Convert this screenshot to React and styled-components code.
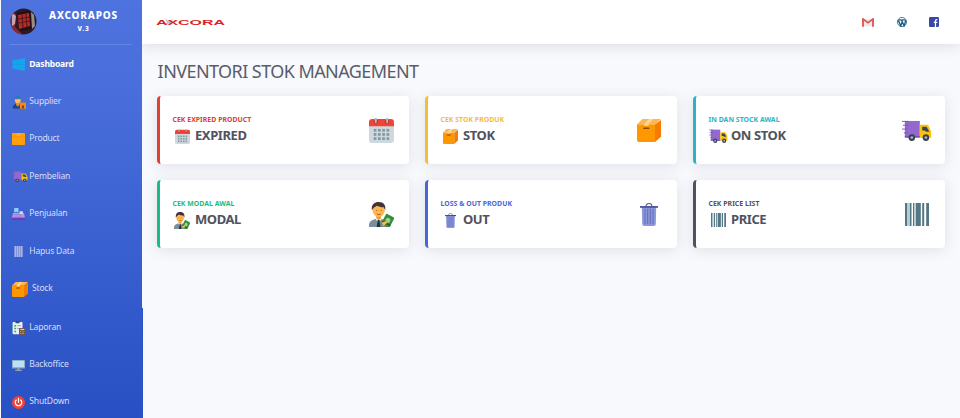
import React from "react";
import styled, { createGlobalStyle } from "styled-components";

const GlobalStyle = createGlobalStyle`
  * { box-sizing: border-box; }
  body { margin: 0; background: #f8f9fd; font-family: "Noto Sans", "Open Sans", sans-serif; }
`;

const Page = styled.div`
  display: flex;
  height: 418px;
  overflow: hidden;
  padding-left: 1px;
`;

const Sidebar = styled.aside`
  position: relative;
  width: 141px;
  flex: none;
  background: linear-gradient(180deg, #4e73df 0%, #4a6fdc 20%, #2850c4 100%);

  &::after {
    content: "";
    position: absolute;
    right: -1px;
    bottom: 0;
    width: 1px;
    height: 110px;
    background: #2c54c8;
  }
`;

const Brand = styled.div`
  display: flex;
  height: 45px;
  margin: 0 10px 0 9px;
  border-bottom: 1px solid #6585e2;
`;

const BrandLogo = styled.div`
  width: 27px;
  height: 27px;
  margin-top: 8px;
`;

const BrandText = styled.div`
  flex: 1;
  padding: 9px 2px 0 0;
  text-align: center;
  color: #fff;
  font-weight: 800;
  font-size: 10px;
  line-height: 13px;
  letter-spacing: 0.8px;
`;

const Version = styled.div`
  font-size: 6.6px;
  line-height: 13px;
  letter-spacing: 0.7px;
`;

const Nav = styled.nav`
  display: flex;
  flex-direction: column;
`;

const NavItem = styled.a`
  display: flex;
  align-items: center;
  height: 37.4px;
  margin-top: ${(p) => p.$gap || 0}px;
  padding-left: 11px;
  color: ${(p) => (p.$active ? "#fff" : "#d6def7")};
  font-weight: ${(p) => (p.$active ? 700 : 400)};
  font-size: 8.6px;
  letter-spacing: -0.22px;
`;

const NavIcon = styled.span`
  display: flex;
  flex: none;
  width: ${(p) => (p.$wide ? 20 : 17.3)}px;
  padding-top: 2px;
`;

const NavLabel = styled.span`
  white-space: nowrap;
`;

const Main = styled.main`
  flex: 1;
  min-width: 0;
`;

const TopBar = styled.header`
  display: flex;
  align-items: center;
  justify-content: space-between;
  height: 44px;
  padding: 0 21px 0 13px;
  background: #fff;
  box-shadow: 0 2px 14px rgba(58, 59, 69, 0.14);
`;

const Links = styled.div`
  display: flex;
  align-items: center;
  gap: 22.5px;
`;

const Title = styled.h1`
  margin: 13.500px 0 0 15.6px;
  height: 26.500px;
  font-weight: 400;
  font-size: 18px;
  line-height: 26px;
  letter-spacing: -0.57px;
  color: #5a5c69;
  white-space: nowrap;
`;

const Grid = styled.div`
  display: grid;
  grid-template-columns: repeat(3, 252px);
  grid-auto-rows: 68px;
  gap: 16px;
  margin: 12px 0 0 15px;
`;

const Card = styled.section`
  display: flex;
  align-items: center;
  justify-content: space-between;
  padding: 0 13px 0 12.500px;
  background: #fff;
  border-left: 3px solid ${(p) => p.$color};
  border-radius: 4px;
  box-shadow: 0 2px 14px rgba(58, 59, 69, 0.13);
`;

const CardLabel = styled.div`
  color: ${(p) => p.$color};
  font-weight: 700;
  font-size: 6.9px;
  line-height: 10px;
  letter-spacing: 0.03px;
  white-space: nowrap;
`;

const CardValue = styled.div`
  display: flex;
  align-items: center;
  height: 20px;
  color: #50525f;
  font-weight: 700;
  font-size: 13px;
  line-height: 20px;
  letter-spacing: -0.42px;
  white-space: nowrap;
`;

const SmallIcon = styled.span`
  display: flex;
  justify-content: center;
  width: 19px;
  margin: 2px 3.500px 0 0;
`;

const LargeIcon = styled.span`
  display: flex;
  justify-content: center;
  width: 30px;
`;

const Svg = ({ size = 14, w, children, box = "0 0 24 24" }) => (
  <svg width={w || size} height={size} viewBox={box} preserveAspectRatio="none">{children}</svg>
);

const Calendar = (p) => (
  <Svg {...p}>
    <path d="M0 5h24v16a3 3 0 0 1-3 3H3a3 3 0 0 1-3-3z" fill="#cfd8dc" />
    <path d="M0 8V4a3 3 0 0 1 3-3h18a3 3 0 0 1 3 3v4z" fill="#f44336" />
    <circle cx="6.5" cy="3.5" r="2" fill="#b71c1c" />
    <circle cx="17.5" cy="3.5" r="2" fill="#b71c1c" />
    <path d="M6.5 0v4M17.5 0v4" stroke="#b0bec5" strokeWidth="2" strokeLinecap="round" />
    {[10.5, 14.5, 18.5].map((y) =>
      [4.5, 8.6, 12.7, 16.8].map((x) => <rect key={`${x}-${y}`} x={x} y={y} width="2.6" height="2.6" fill="#8199a5" />)
    )}
  </Svg>
);

const Box = (p) => (
  <Svg {...p}>
    <path d="M0 5.5h18V24H2a2 2 0 0 1-2-2z" fill="#ff9800" />
    <path d="M18 5.5L24 1v17.5L18 24z" fill="#f57c00" />
    <path d="M0 5.5L5.5 0H24l-6 5.5z" fill="#ffb74d" />
    <path d="M7 5.5L12 0h4l-4.500 5.500v1.500H7z" fill="#ffd699" />
    <rect x="6" y="8.8" width="6.5" height="1.6" rx=".8" fill="#8a4b00" />
  </Svg>
);

const FlatBox = (p) => (
  <Svg {...p}>
    <rect width="24" height="24" rx="1.5" fill="#ff9f0a" />
    <path d="M0 7h24" stroke="#f79708" strokeWidth="1.5" />
    <path d="M9 0h6v7l-3-2-3 2z" fill="#f9b040" />
  </Svg>
);

const Truck = (p) => (
  <Svg {...p} box="0 0 32 22">
    <path d="M3 1h16v17H3z" fill="#9368cf" />
    <path d="M0 1.5h7M1 5.5h6M0 9.5h6M2 13.5h4" stroke="#7a52bb" strokeWidth="1" />
    <path d="M19 5h7.5a2 2 0 0 1 2 1.4L31 12v6.5H19z" fill="#fdc107" />
    <path d="M21.5 7h4.7l3 5.2h-3.5l-1.5-1.2h-2.7z" fill="#37475a" />
    <path d="M3 17h16v1.5H3z" fill="#7148b0" />
    {[10.5, 25.5].map((x) => (
      <g key={x}>
        <circle cx={x} cy="18.4" r="3.5" fill="#37404f" />
        <circle cx={x} cy="18.4" r="1.5" fill="#a4b2bc" />
      </g>
    ))}
  </Svg>
);

const Banker = (p) => (
  <Svg {...p}>
    <path d="M0 24v-2c0-4 4-5.5 9-6.5 5 1 9 2.500 9 6.500v2z" fill="#78909c" />
    <path d="M6 15.500l3 5 3.500-5z" fill="#f1f5f7" />
    <path d="M8.300 17h1.800l.9 7H7.400z" fill="#263238" />
    <path d="M7 11h4.500v4.500L9.300 17 7 15.500z" fill="#f09b22" />
    <path d="M3.500 5.500c0-5 11.500-5 11.500 0v3c0 3-2.500 6-5.700 6s-5.800-3-5.800-6z" fill="#ffb74d" />
    <path d="M2.800 8C2 2.500 5 0 9.500 0S16.500 3 15.500 8l-1.300-3c-3 0-5-.7-6.700-1.500L4.500 5.500z" fill="#423338" />
    <path d="M7 8.200h.8M11.300 8.200h.8M7.500 11.500c1.200.8 2.500.8 3.700 0" stroke="#7a4428" strokeWidth=".8" fill="none" />
    <g transform="rotate(28 18 18)">
      <rect x="13.500" y="12.500" width="9" height="11" rx=".7" fill="#388e3c" />
      <circle cx="18" cy="17.500" r="2.300" fill="#9bd49c" />
      <path d="M13.500 21h9" stroke="#1d5f2c" strokeWidth="1.300" />
    </g>
    <path d="M12 20l4-1.500 1.500 1.500-3.500 3z" fill="#ffb74d" />
  </Svg>
);

const Trash = (p) => (
  <Svg {...p} box="0 0 18 24">
    <path d="M6 3.500c0-4 6-4 6 0" fill="none" stroke="#5c6595" strokeWidth="1.200" />
    <path d="M1.800 4h14.400l-.4 18a2 2 0 0 1-2 2H4.200a2 2 0 0 1-2-2z" fill="#8c98da" />
    <path d="M0 3.200h18v1.800H0z" fill="#465091" />
    <path d="M5 6v16M7.700 6v16M10.300 6v16M13 6v16" stroke="#5a67b4" strokeWidth=".9" />
  </Svg>
);

const Barcode = (p) => (
  <Svg {...p}>
    <path d="M0 0h2.400v24H0zM4.600 0h1.900v24H4.600zM8 0h1.400v24H8zM11 0h4.800v24H11zM17.200 0h2v24h-2zM21.200 0H24v24h-2.800z" fill="#557684" />
    <path d="M2.800 0h1.200v24H2.800zM9.400 0H11v24H9.400z" fill="#b5d0d5" />
  </Svg>
);

const Windows = () => (
  <Svg size={13}>
    <path d="M1 4l9.500-1.500V11.500H1zM11 2.300L24 .5v11H11zM1 12h9.500v9.500L1 20zM11 12H24v11.500l-13-1.800z" fill="#14a5ef" />
  </Svg>
);

const Supplier = () => (
  <Svg size={14}>
    <path d="M1 23c0-6 4-8 9-8s8 3 8 8z" fill="#17457e" />
    <path d="M7 13h6v4l-3 3-3-3z" fill="#e58c30" />
    <circle cx="10" cy="9" r="5" fill="#ffb85c" />
    <path d="M4.500 8C4 0 16 0 15.500 8z" fill="#2476bd" />
    <path d="M5 7.500h10" stroke="#e8c68c" strokeWidth="1.400" />
    <rect x="13.500" y="13" width="10.500" height="10.500" rx="1" fill="#f18a18" />
    <path d="M17 23v-5h3.500v5" fill="#7b421c" />
  </Svg>
);

const Register = () => (
  <Svg size={13}>
    <path d="M4 0h8v8H4z" fill="#8bd1ff" />
    <path d="M7 7h2v4H7z" fill="#446bbd" />
    <path d="M2 9h20l2 9H0z" fill="#b39add" />
    <path d="M14 6h6v5h-6z" fill="#e2d7fa" />
    <path d="M5 12h13M4 15h15" stroke="#8a74c8" strokeWidth="1.300" strokeDasharray="2 1" />
    <path d="M0 18h24v4H0z" fill="#6d3fb5" />
  </Svg>
);

const Report = () => (
  <Svg size={14}>
    <rect x="1" y="1.500" width="17" height="21" rx="1.500" fill="#e9f2ee" />
    <rect x="6" y="0" width="7" height="4" rx="1" fill="#344c67" />
    <path d="M4 8h3M4 13h3M4 18h3" stroke="#35a653" strokeWidth="2.500" />
    <path d="M9 8h6M9 13h4" stroke="#82939a" strokeWidth="1.300" />
    <rect x="12" y="12" width="11" height="12" rx="1" fill="#745648" />
    <path d="M14 14.500h7" stroke="#d6d48a" strokeWidth="2" />
    <path d="M14 18.500h7M14 21.500h7" stroke="#c5a99c" strokeWidth="1.500" strokeDasharray="1.600 1" />
  </Svg>
);

const Monitor = () => (
  <Svg size={12} w={13}>
    <path d="M10 18h4v4h-4z" fill="#8b9da9" />
    <rect y="2" width="24" height="17" rx="1" fill="#8da4b4" />
    <path d="M1.500 3.500h21v13h-21z" fill="#b9e1fb" />
    <path d="M6 21.500h12V24H6z" fill="#90a4ae" />
  </Svg>
);

const Power = () => (
  <Svg size={13}>
    <circle cx="12" cy="12" r="12" fill="#f44336" />
    <path d="M8 7.500a6 6 0 1 0 8 0M12 4.500v7" fill="none" stroke="#fff" strokeWidth="2.200" strokeLinecap="round" />
  </Svg>
);

const Avatar = () => (
  <svg width="27" height="27" viewBox="0 0 27 27">
    <defs><clipPath id="avatarClip"><circle cx="13.500" cy="13.500" r="13" /></clipPath></defs>
    <g clipPath="url(#avatarClip)">
      <rect width="27" height="27" fill="#2a1a22" />
      <path d="M0 3l6 3-1 13 8 8H0z" fill="#8b2735" />
      <path d="M2 5l4 3-1 8-3 2z" fill="#c3a5b0" />
      <path d="M7 5l13-3 2 19-12 2z" fill="#211116" />
      <path d="M8 7l11-2 1 13-11 3z" fill="#b92a26" />
      <path d="M8.500 11l11-2M9 15l11-2M12 6l1 14M16 6l1 13" stroke="#55191c" strokeWidth="1.100" />
      <path d="M21 4l3 3 1 11-3 3z" fill="#9c8e87" />
    </g>
  </svg>
);

const Wordmark = () => (
  <svg width="71" height="12" viewBox="0 0 71 12">
    <path d="M10 2.500l4 3 5-3-3.500 4 2 2-4-1-4 2 2.500-3z" fill="#aebdde" />
    <text x="1" y="8.900" textLength="69" lengthAdjust="spacingAndGlyphs" fontFamily="Liberation Sans, Arial, sans-serif" fontWeight="700" fontSize="7.900" fill="#dc1f26">AXCORA</text>
  </svg>
);

const Gmail = () => (
  <Svg size={9} w={12}>
    <path d="M2 2h20v20H2z" fill="#eee9e9" />
    <path d="M2 23V2.500l10 10 10-10V23" fill="none" stroke="#d9534c" strokeWidth="3.600" />
  </Svg>
);

const Wordpress = () => (
  <Svg size={10}>
    <circle cx="12" cy="12" r="11" fill="#fff" stroke="#27658a" strokeWidth="2" />
    <path d="M3 7.500l6 14 3.500-10-2-4.500M5 7h6M11 7l6 14.500 3.500-11L18 6M12 7h5" fill="none" stroke="#1f5b80" strokeWidth="3.200" />
  </Svg>
);

const Facebook = () => (
  <Svg size={10}>
    <rect width="24" height="24" rx="3" fill="#3747a8" />
    <path d="M20 6h-2c-2 0-2.500 1-2.500 3v15M11.500 13H20" fill="none" stroke="#fff" strokeWidth="3" />
  </Svg>
);

const NavTrashWrap = styled.span`
  display: flex;
  padding-left: 2px;
`;

const NavTrash = () => (
  <NavTrashWrap>
    <Svg size={11} w={9} box="0 0 18 22">
      <path d="M0 0h18v22H0z" fill="#8594d8" />
      <path d="M3 0v22M7 0v22M11 0v22M15 0v22" stroke="#b4bde6" strokeWidth="1.500" />
    </Svg>
  </NavTrashWrap>
);

const navItems = [
  { label: "Dashboard", icon: <Windows />, active: true },
  { label: "Supplier", icon: <Supplier /> },
  { label: "Product", icon: <FlatBox size={12} w={13} /> },
  { label: "Pembelian", icon: <Truck size={11} w={16} /> },
  { label: "Penjualan", icon: <Register /> },
  { label: "Hapus Data", icon: <NavTrash /> },
  { label: "Stock", icon: <Box size={15} w={16} />, wide: true },
  { label: "Laporan", icon: <Report />, gap: 1.2 },
  { label: "Backoffice", icon: <Monitor /> },
  { label: "ShutDown", icon: <Power /> },
];

const cards = [
  { label: "CEK EXPIRED PRODUCT", value: "EXPIRED", color: "#e0402f", Icon: Calendar, s: [15, 15], l: [25, 25] },
  { label: "CEK STOK PRODUK", value: "STOK", color: "#f3bd3b", Icon: Box, s: [15, 15], l: [24, 23] },
  { label: "IN DAN STOCK AWAL", value: "ON STOK", color: "#2eb3c3", Icon: Truck, s: [19, 14], l: [31, 21] },
  { label: "CEK MODAL AWAL", value: "MODAL", color: "#1abc81", Icon: Banker, s: [16, 17], l: [25, 25] },
  { label: "LOSS & OUT PRODUK", value: "OUT", color: "#4867d2", Icon: Trash, s: [11, 15], l: [18, 23] },
  { label: "CEK PRICE LIST", value: "PRICE", color: "#50525f", Icon: Barcode, s: [15, 14], l: [24, 23] },
];

export default function App() {
  return (
    <>
      <GlobalStyle />
      <Page>
        <Sidebar>
          <Brand>
            <BrandLogo><Avatar /></BrandLogo>
            <BrandText>AXCORAPOS<Version>V.3</Version></BrandText>
          </Brand>
          <Nav>
            {navItems.map((n) => (
              <NavItem key={n.label} $active={n.active} $gap={n.gap}>
                <NavIcon $wide={n.wide}>{n.icon}</NavIcon>
                <NavLabel>{n.label}</NavLabel>
              </NavItem>
            ))}
          </Nav>
        </Sidebar>
        <Main>
          <TopBar>
            <Wordmark />
            <Links><Gmail /><Wordpress /><Facebook /></Links>
          </TopBar>
          <Title>INVENTORI STOK MANAGEMENT</Title>
          <Grid>
            {cards.map(({ label, value, color, Icon, s, l }) => (
              <Card key={label} $color={color}>
                <div>
                  <CardLabel $color={color}>{label}</CardLabel>
                  <CardValue>
                    <SmallIcon><Icon w={s[0]} size={s[1]} /></SmallIcon>
                    {value}
                  </CardValue>
                </div>
                <LargeIcon><Icon w={l[0]} size={l[1]} /></LargeIcon>
              </Card>
            ))}
          </Grid>
        </Main>
      </Page>
    </>
  );
}
